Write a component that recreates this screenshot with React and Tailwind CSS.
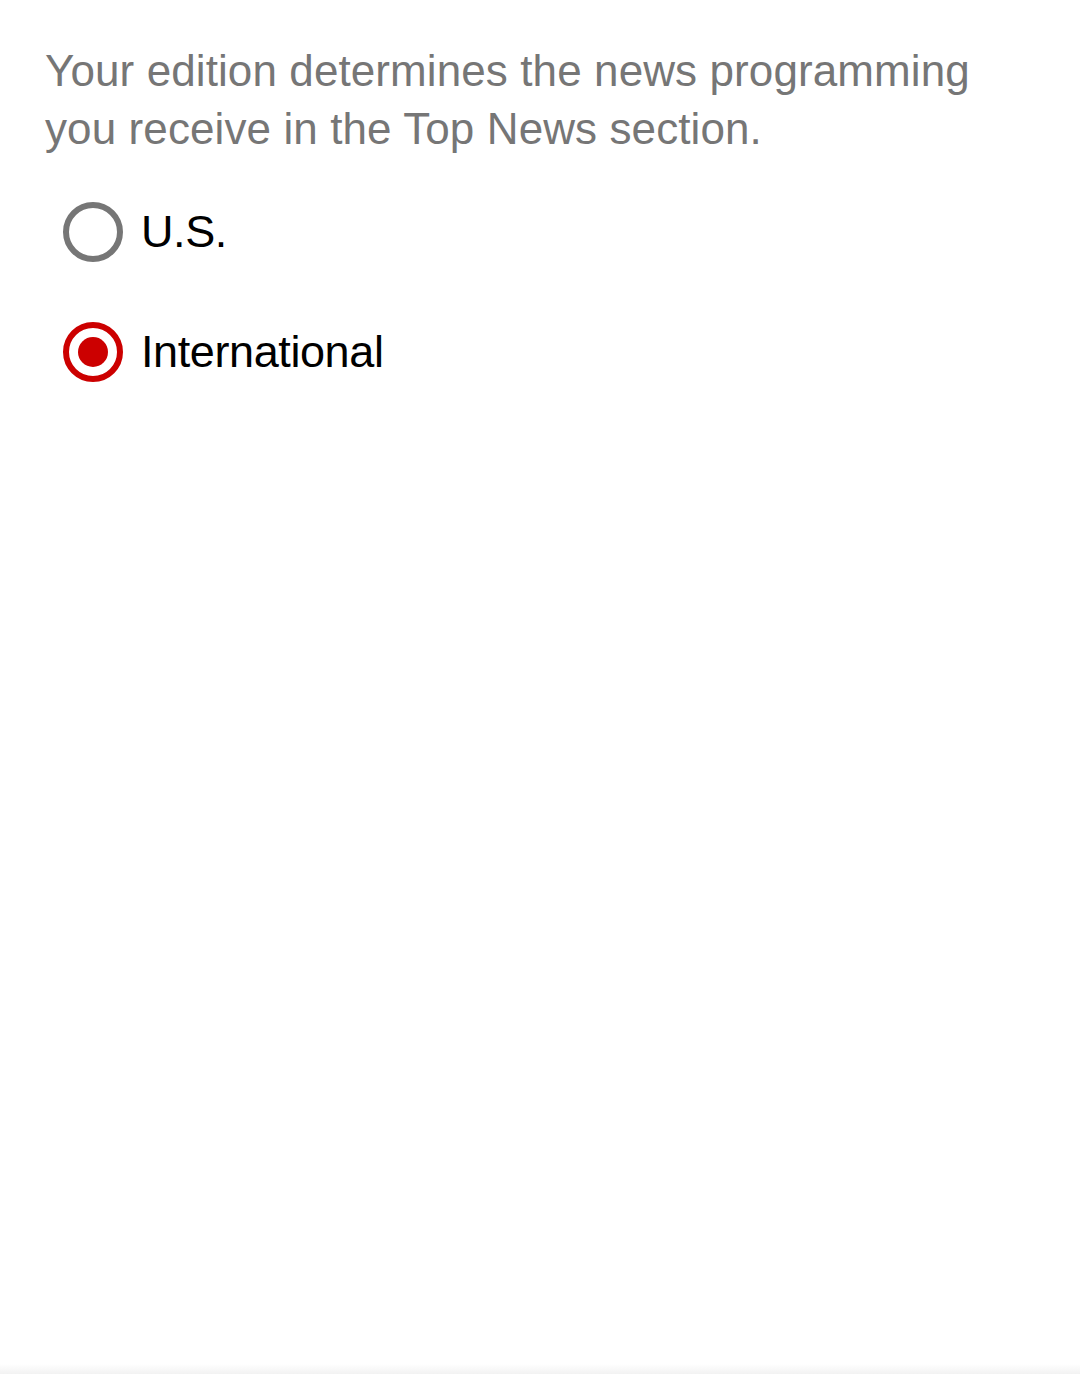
import React, { useState } from 'react';

const editions = [
  { id: 'us', label: 'U.S.' },
  { id: 'intl', label: 'International' },
];

const Radio = ({ checked }) => (
  <span
    className={`flex items-center justify-center w-[60px] h-[60px] rounded-full border-[6px] flex-shrink-0 ${
      checked ? 'border-[#cc0000]' : 'border-[#767676]'
    }`}
  >
    {checked && <span className="w-[30px] h-[30px] rounded-full bg-[#cc0000]" />}
  </span>
);

export default function App() {
  const [edition, setEdition] = useState('intl');

  return (
    <div className="relative w-[1080px] h-[1374px] bg-white overflow-hidden font-['Liberation_Sans',Arial,sans-serif]">
      <div className="pl-[45px] pt-[42px]">
        <p className="max-w-[1000px] text-[44px] leading-[58px] text-[#767676] tracking-[0.1px]">
          Your edition determines the news programming you receive in the Top News section.
        </p>

        <div className="mt-[44px] pl-[18px] flex flex-col gap-[60px]">
          {editions.map((e) => (
            <button
              key={e.id}
              onClick={() => setEdition(e.id)}
              className="flex items-center gap-[18px] text-left"
            >
              <Radio checked={edition === e.id} />
              <span className="text-[45px] leading-[56px] text-black tracking-[-0.4px]">{e.label}</span>
            </button>
          ))}
        </div>
      </div>

      <div className="absolute bottom-0 left-0 w-full h-[10px] bg-gradient-to-b from-white to-[#f2f2f2]" />
    </div>
  );
}
